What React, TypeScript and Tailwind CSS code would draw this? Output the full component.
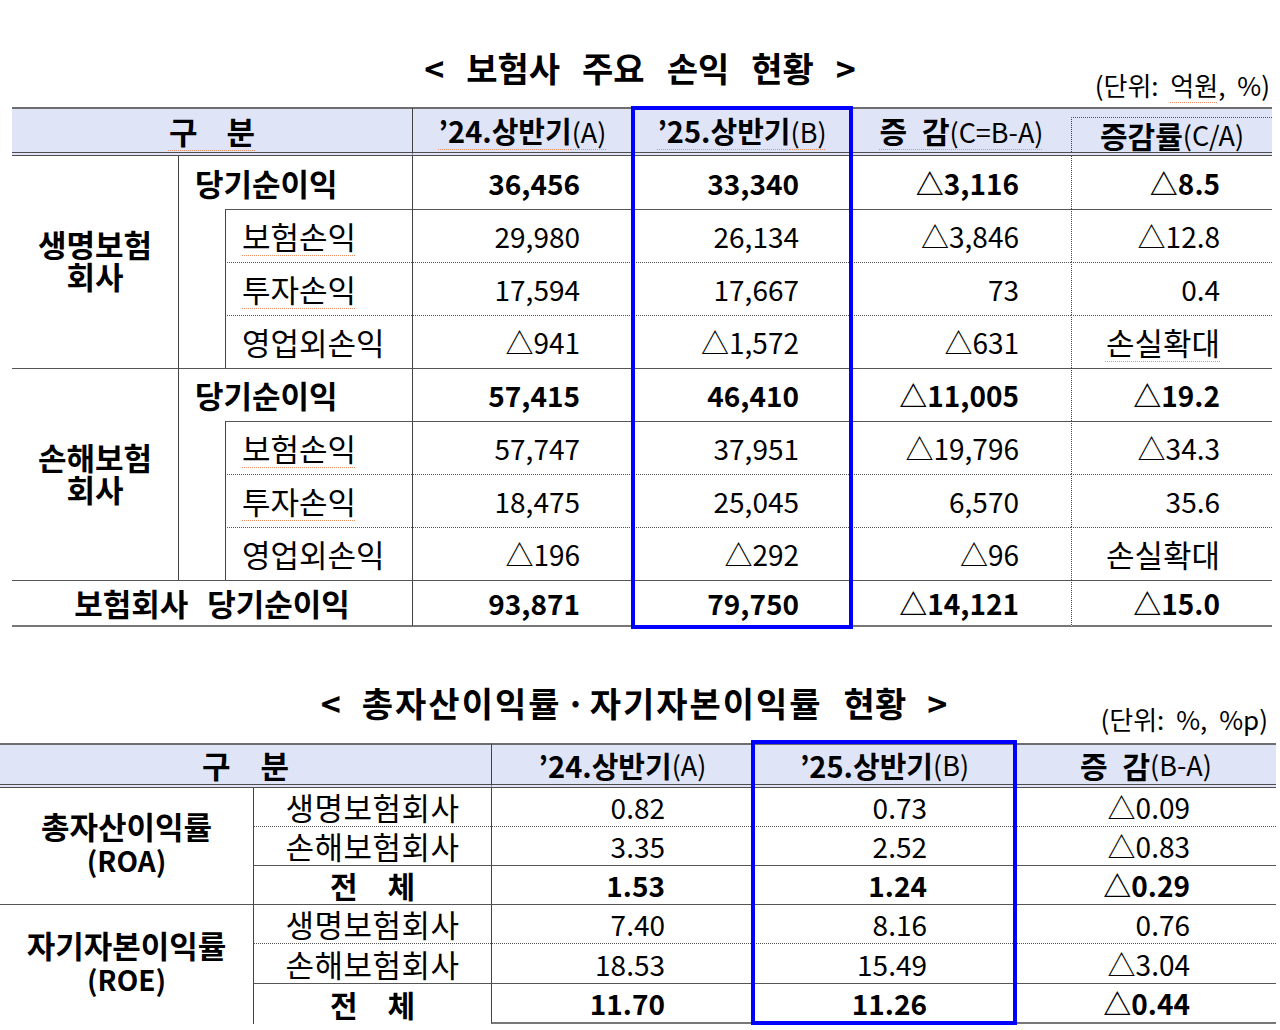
import React from "react";

const F = "font-['Noto_Sans_CJK_KR','Noto_Sans',sans-serif]";
const SQ = "underline decoration-dotted decoration-[#ee8d5f] decoration-1 underline-offset-[6px]";

type S = "none" | "solid" | "dotted";
const TOP: Record<S, string> = {
  none: "",
  solid: "[border-top:1px_solid_#555]",
  dotted: "[border-top:1px_dotted_#555]",
};
const LEFT: Record<S, string> = {
  none: "",
  solid: "[border-left:1px_solid_#444]",
  dotted: "[border-left:1px_dotted_#444]",
};

function C({
  t = "none",
  l = "none",
  className = "",
  children,
}: {
  t?: S;
  l?: S;
  className?: string;
  children?: React.ReactNode;
}) {
  return <div className={`${TOP[t]} ${LEFT[l]} ${className}`}>{children}</div>;
}

const H1 =
  "bg-[#dfe4f7] [border-top:2px_solid_#6e6e6e] [border-bottom:4px_double_#4d4d4d] flex items-center justify-center";
const N1 = "flex items-center justify-end pr-[52px]";
const N2 = "flex items-center justify-end";

type Sub = { name: string; nameSq?: boolean; vals: string[]; lastSq?: boolean };

function Val({ v, sq }: { v: string; sq?: boolean }) {
  if (v === "손실확대") return <span className={`text-[31px] ${sq ? SQ : ""}`}>{v}</span>;
  return <span>{v}</span>;
}

function Group1({ label, total, subs, second }: { label: string[]; total: string[]; subs: Sub[]; second?: boolean }) {
  const tops: S[] = ["solid", "dotted", "dotted"];
  const t0: S = second ? "solid" : "none";
  return (
    <>
      <C t={t0} className="row-span-4 flex flex-col items-center justify-center pb-[4px] font-bold text-[31px] leading-[32px]">
        <span>{label[0]}</span>
        <span>{label[1]}</span>
      </C>
      <C t={t0} l="solid" className="col-span-2 flex items-center pl-[16px] font-bold text-[31px]">
        당기순이익
      </C>
      {total.map((v, i) => (
        <C key={i} t={t0} l={i === 3 ? "dotted" : "solid"} className={`${N1} font-bold`}>
          {v}
        </C>
      ))}
      {subs.map((s, r) => (
        <React.Fragment key={r}>
          {r === 0 && <C l="solid" className="row-span-3" />}
          <C t={tops[r]} l="solid" className="flex items-center pl-[16px] text-[31px]">
            <span className={s.nameSq ? SQ : ""}>{s.name}</span>
          </C>
          {s.vals.map((v, i) => (
            <C key={i} t={tops[r]} l={i === 3 ? "dotted" : "solid"} className={N1}>
              <Val v={v} sq={i === 3 && s.lastSq} />
            </C>
          ))}
        </React.Fragment>
      ))}
    </>
  );
}

function Table1() {
  return (
    <div className="grid grid-cols-[166px_47px_187px_220px_219px_220px_201px] grid-rows-[49px_53px_53px_53px_53px_53px_53px_53px_53px_47px] text-[28px] leading-[34px]">
      {/* header */}
      <div className={`${H1} col-span-3 font-bold text-[31px]`}>
        <span className={`${SQ} [word-spacing:22px]`}>구 분</span>
      </div>
      <div className={`${H1} [border-left:1px_solid_#444]`}>
        <span className={SQ}>
          <b className="text-[29px]">’24.상반기</b>
          <span className="text-[27px]">(A)</span>
        </span>
      </div>
      <div className={`${H1} [border-left:1px_solid_#444]`}>
        <span className={SQ}>
          <b className="text-[29px]">’25.상반기</b>
          <span className="text-[27px]">(B)</span>
        </span>
      </div>
      <div className={`${H1} [border-left:1px_solid_#444]`}>
        <span className={SQ}>
          <b className="text-[30px] [word-spacing:8px]">증 감</b>
          <span className="text-[27px]">(C=B-A)</span>
        </span>
      </div>
      <div className="bg-[#dfe4f7] [border-top:2px_solid_#6e6e6e] [border-bottom:4px_double_#4d4d4d] flex flex-col">
        <div className="mt-[8px] flex-1 [border-top:1px_dotted_#555] [border-left:1px_dotted_#444] flex items-center justify-center">
          <b className="text-[30px]">증감률</b>
          <span className="text-[27px]">(C/A)</span>
        </div>
      </div>

      <Group1
        label={["생명보험", "회사"]}
        total={["36,456", "33,340", "△3,116", "△8.5"]}
        subs={[
          { name: "보험손익", nameSq: true, vals: ["29,980", "26,134", "△3,846", "△12.8"] },
          { name: "투자손익", nameSq: true, vals: ["17,594", "17,667", "73", "0.4"] },
          { name: "영업외손익", vals: ["△941", "△1,572", "△631", "손실확대"], lastSq: true },
        ]}
      />
      <Group1
        second
        label={["손해보험", "회사"]}
        total={["57,415", "46,410", "△11,005", "△19.2"]}
        subs={[
          { name: "보험손익", nameSq: true, vals: ["57,747", "37,951", "△19,796", "△34.3"] },
          { name: "투자손익", nameSq: true, vals: ["18,475", "25,045", "6,570", "35.6"] },
          { name: "영업외손익", vals: ["△196", "△292", "△96", "손실확대"] },
        ]}
      />

      {/* total */}
      <C t="solid" className="col-span-3 flex items-center justify-center gap-[19px] font-bold text-[31px] [border-bottom:2px_solid_#777]">
        <span>보험회사</span>
        <span>당기순이익</span>
      </C>
      {["93,871", "79,750", "△14,121", "△15.0"].map((v, i) => (
        <C key={i} t="solid" l={i === 3 ? "dotted" : "solid"} className={`${N1} font-bold [border-bottom:2px_solid_#777]`}>
          {v}
        </C>
      ))}
    </div>
  );
}

type R2 = { name: string; vals: string[]; bold?: boolean };

function Group2({ label, rows, first }: { label: string[]; rows: R2[]; first: boolean }) {
  const tops: S[] = [first ? "none" : "solid", "dotted", "solid"];
  return (
    <>
      <C t={first ? "none" : "solid"} className="row-span-3 flex flex-col items-center justify-center pb-[6px] font-bold leading-[34px]">
        <span className="text-[31px]">{label[0]}</span>
        <span className="text-[28px]">{label[1]}</span>
      </C>
      {rows.map((r, i) => (
        <React.Fragment key={i}>
          <C
            t={tops[i]}
            l="solid"
            className={`flex items-center justify-center ${r.bold ? "font-bold text-[30px] gap-[30px]" : "text-[31px] tracking-[0.5px]"}`}
          >
            {r.bold ? (
              <>
                <span>전</span>
                <span>체</span>
              </>
            ) : (
              r.name
            )}
          </C>
          {r.vals.map((v, j) => (
            <C
              key={j}
              t={tops[i]}
              l="solid"
              className={`${N2} ${j === 2 ? "pr-[86px]" : "pr-[88px]"} ${r.bold ? "font-bold" : ""} ${i === 2 && !first ? "[border-bottom:2px_solid_#777]" : ""}`}
            >
              {v}
            </C>
          ))}
        </React.Fragment>
      ))}
    </>
  );
}

function Table2() {
  return (
    <div className="grid grid-cols-[253px_238px_262px_262px_261px] grid-rows-[45px_38px_39px_39px_39px_40px_41px] text-[28px] leading-[34px]">
      <div className={`${H1} col-span-2 font-bold text-[31px]`}>
        <span className="[word-spacing:23px]">구 분</span>
      </div>
      <div className={`${H1} [border-left:1px_solid_#444]`}>
        <b className="text-[29px]">’24.상반기</b>
        <span className="text-[27px]">(A)</span>
      </div>
      <div className={`${H1} [border-left:1px_solid_#444]`}>
        <b className="text-[29px]">’25.상반기</b>
        <span className="text-[27px]">(B)</span>
      </div>
      <div className={`${H1} [border-left:1px_solid_#444]`}>
        <b className="text-[30px] [word-spacing:8px]">증 감</b>
        <span className="text-[27px]">(B-A)</span>
      </div>

      <Group2
        first
        label={["총자산이익률", "(ROA)"]}
        rows={[
          { name: "생명보험회사", vals: ["0.82", "0.73", "△0.09"] },
          { name: "손해보험회사", vals: ["3.35", "2.52", "△0.83"] },
          { name: "전 체", vals: ["1.53", "1.24", "△0.29"], bold: true },
        ]}
      />
      <Group2
        first={false}
        label={["자기자본이익률", "(ROE)"]}
        rows={[
          { name: "생명보험회사", vals: ["7.40", "8.16", "0.76"] },
          { name: "손해보험회사", vals: ["18.53", "15.49", "△3.04"] },
          { name: "전 체", vals: ["11.70", "11.26", "△0.44"], bold: true },
        ]}
      />
    </div>
  );
}

export default function App() {
  return (
    <div className={`${F} w-[1280px] h-[1030px] bg-white text-black overflow-hidden`}>
      <div className="pt-[48px]">
        <div className="grid h-[52px]">
          <div className="col-start-1 row-start-1 self-start justify-self-center flex items-center gap-[22px] text-[34px] leading-[40px] font-bold">
            <span>&lt;</span>
            <span>보험사</span>
            <span>주요</span>
            <span>손익</span>
            <span>현황</span>
            <span>&gt;</span>
          </div>
          <div className="col-start-1 row-start-1 self-end justify-self-end pr-[10px] text-[26px] leading-[30px] [word-spacing:6px]">
            (단위: <span className={SQ}>억원</span>, %)
          </div>
        </div>
      </div>
      <div className="relative ml-[12px] mt-[7px] w-[1260px]">
        <Table1 />
        <div className="absolute left-[619px] top-[-1px] w-[222px] h-[523px] border-4 border-[#0000ff]" />
      </div>

      <div className="mt-[56px]">
        <div className="grid h-[51px]">
          <div className="col-start-1 row-start-1 self-start justify-self-center flex items-center gap-[21px] pr-[12px] text-[34px] leading-[40px] font-bold">
            <span>&lt;</span>
            <span className="flex items-center gap-[4px]">
              <span className="tracking-[2px]">총자산이익률</span>
              <span>·</span>
              <span className="tracking-[2px]">자기자본이익률</span>
            </span>
            <span>현황</span>
            <span>&gt;</span>
          </div>
          <div className="col-start-1 row-start-1 self-end justify-self-end pr-[12px] text-[26px] leading-[30px] [word-spacing:6px]">
            (단위: %, %p)
          </div>
        </div>
      </div>
      <div className="relative mt-[9px] w-[1276px]">
        <Table2 />
        <div className="absolute left-[751px] top-[-3px] w-[266px] h-[285px] border-4 border-[#0000ff]" />
      </div>
    </div>
  );
}
